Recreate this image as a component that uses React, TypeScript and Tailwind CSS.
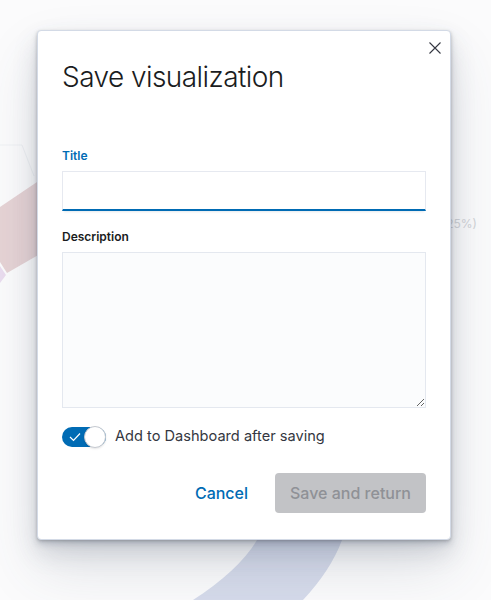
import React from "react";

const ChartBackdrop = () => (
  <svg
    className="absolute inset-0 h-full w-full"
    viewBox="0 0 491 600"
    aria-hidden="true"
  >
    <polyline points="0,145 22,145 34,176" fill="none" stroke="#eff1f4" strokeWidth="1" />
    <path d="M0 207 L40 180 L40 254 L7 273 L0 262 Z" fill="#e6d3d5" />
    <path d="M0 266 L6 275 L0 283 Z" fill="#eadcef" />
    <path d="M257 540 Q239 570 193 600 L303 600 Q331 570 342 540 Z" fill="#d6dbeb" />
    <text
      x="477"
      y="228"
      textAnchor="end"
      fontSize="12"
      fill="#d2d4d8"
      fontFamily="Inter, sans-serif"
    >
      (25%)
    </text>
  </svg>
);

const CloseIcon = () => (
  <svg width="12" height="12" viewBox="0 0 12 12" fill="none">
    <path d="M0.5 0.5 L11.5 11.5 M11.5 0.5 L0.5 11.5" stroke="#343741" strokeWidth="1.1" />
  </svg>
);

const CheckIcon = () => (
  <svg width="12" height="10" viewBox="0 0 12 10" fill="none">
    <path d="M1 5 L4.5 8.5 L11 1.5" stroke="#ffffff" strokeWidth="1.2" />
  </svg>
);

const SaveModal = () => {
  return (
    <div className="relative w-[414px] rounded-[4px] border border-[#d3dae6] bg-white px-6 pt-[26px] pb-[26px] shadow-[0_1px_3px_rgba(0,0,0,0.18),0_4px_6px_rgba(65,78,101,0.22),0_12px_24px_rgba(65,78,101,0.18),0_28px_56px_rgba(65,78,101,0.15)]">
      <button className="absolute top-[11px] right-[9px] flex h-3 w-3 items-center justify-center">
        <CloseIcon />
      </button>

      <h1 className="h-10 text-[28px] leading-10 font-light tracking-[-0.02em] text-[#1a1c21]">
        Save visualization
      </h1>

      <form className="mt-[50px]">
        <label className="mb-[6px] block h-[18px] text-xs leading-[18px] font-semibold text-[#006bb4]">
          Title
        </label>
        <input
          type="text"
          className="block h-10 w-full border border-[#e6e9f0] border-b-2 border-b-[#006bb4] bg-white px-3 text-sm outline-none shadow-[0_3px_2px_-2px_rgba(152,162,179,0.25)]"
        />

        <label className="mt-[17px] mb-[6px] block h-[18px] text-xs leading-[18px] font-semibold text-[#1a1c21]">
          Description
        </label>
        <textarea className="block h-[156px] w-full border border-[#e4e8ef] bg-[#fbfcfd] p-3 text-sm outline-none" />

        <div className="mt-[19px] flex h-5 items-center">
          <div className="relative h-5 w-11 rounded-full bg-[#006bb4]">
            <span className="absolute top-[5px] left-[7px]">
              <CheckIcon />
            </span>
            <span className="absolute -top-px right-0 h-[22px] w-[22px] rounded-full border border-[#c6cad1] bg-white shadow-[0_1px_2px_rgba(0,0,0,0.1)]" />
          </div>
          <span className="ml-[9px] text-[14.6px] text-[#343741]">
            Add to Dashboard after saving
          </span>
        </div>

        <div className="mt-[26px] flex items-center justify-end">
          <button
            type="button"
            className="mr-[15px] h-10 px-3 text-base font-medium text-[#006bb4]"
          >
            Cancel
          </button>
          <button
            type="button"
            disabled
            className="h-10 w-[151px] rounded-[4px] bg-[#c2c3c6] text-base font-medium text-[#8f9196]"
          >
            Save and return
          </button>
        </div>
      </form>
    </div>
  );
};

export default function App() {
  return (
    <div className="relative h-[600px] w-[491px] overflow-hidden bg-[#fbfbfc] font-['Inter',sans-serif]">
      <ChartBackdrop />
      <div className="relative pt-[30px] pl-[37px]">
        <SaveModal />
      </div>
    </div>
  );
}
